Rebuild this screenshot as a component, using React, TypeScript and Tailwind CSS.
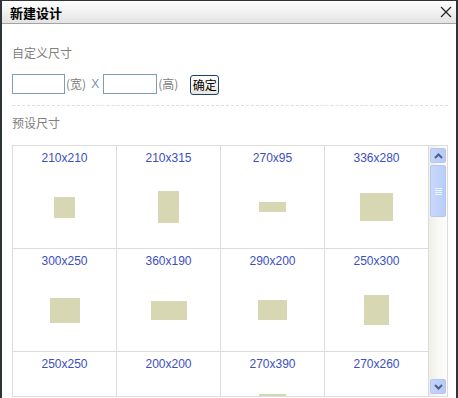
import React from "react";

// preset sizes shown in the grid
const presets = [
  { w: 210, h: 210 },
  { w: 210, h: 315 },
  { w: 270, h: 95 },
  { w: 336, h: 280 },
  { w: 300, h: 250 },
  { w: 360, h: 190 },
  { w: 290, h: 200 },
  { w: 250, h: 300 },
  { w: 250, h: 250 },
  { w: 200, h: 200 },
  { w: 270, h: 390 },
  { w: 270, h: 260 },
];

const cjk = "font-['SimSun','Noto_Sans_CJK_SC',sans-serif]";

function ScrollBar() {
  return (
    <div className="w-[18px] shrink-0 flex flex-col items-center py-[2px] bg-gradient-to-r from-[#efeee8] via-[#f8f8f4] to-[#fdfdfb]">
      {/* up arrow */}
      <div className="w-[16px] h-[15px] rounded-[2px] border border-[#b6c7ef] bg-gradient-to-r from-[#c4d4fb] to-[#b7cbf8] flex items-center justify-center">
        <svg width="9" height="6" viewBox="0 0 9 6">
          <path d="M1 5 L4.5 1.5 L8 5" fill="none" stroke="#4d6185" strokeWidth="2" />
        </svg>
      </div>
      {/* thumb */}
      <div className="mt-[2px] w-[16px] h-[52px] rounded-[2px] border border-[#b6c7ef] bg-gradient-to-r from-[#c9d8fc] to-[#b9cdf9] flex flex-col items-center justify-center gap-[1px]">
        <div className="w-[7px] h-px bg-[#eef3fe]" />
        <div className="w-[7px] h-px bg-[#eef3fe]" />
        <div className="w-[7px] h-px bg-[#eef3fe]" />
        <div className="w-[7px] h-px bg-[#eef3fe]" />
      </div>
      <div className="flex-1" />
      {/* down arrow */}
      <div className="w-[16px] h-[15px] rounded-[2px] border border-[#b6c7ef] bg-gradient-to-r from-[#c4d4fb] to-[#b7cbf8] flex items-center justify-center">
        <svg width="9" height="6" viewBox="0 0 9 6">
          <path d="M1 1 L4.5 4.5 L8 1" fill="none" stroke="#4d6185" strokeWidth="2" />
        </svg>
      </div>
    </div>
  );
}

export default function App() {
  return (
    <div className="w-[458px] h-[398px] overflow-hidden bg-white border-t border-x-2 border-[#2f3437] flex flex-col">
      {/* Title bar */}
      <div className="h-[23px] shrink-0 flex items-center justify-between pl-2 pr-[4px] bg-gradient-to-b from-white to-[#e3e3e3] border-b border-[#a4a4a4]">
        <span className={`${cjk} text-[13px] font-bold text-black leading-none`}>新建设计</span>
        <svg width="12" height="12" viewBox="0 0 12 12">
          <path d="M1 1 L11 11 M11 1 L1 11" stroke="#222" strokeWidth="1.2" />
        </svg>
      </div>

      <div className="pl-[10px] pr-[8px] flex flex-col">
        <div className={`${cjk} mt-[21px] text-[12px] leading-[16px] text-[#808080]`}>自定义尺寸</div>

        {/* custom size row */}
        <div className="mt-[13px] flex items-center h-[20px]">
          <input className="w-[53px] h-[20px] border border-[#7f9db9] outline-none" />
          <span className={`${cjk} ml-px text-[12px] text-[#808080]`}>(宽)</span>
          <span className="ml-[5px] font-['Liberation_Sans',sans-serif] text-[12px] text-[#8090b0]">X</span>
          <input className="ml-[4px] w-[54px] h-[20px] border border-[#7f9db9] outline-none" />
          <span className={`${cjk} ml-px text-[12px] text-[#808080]`}>(高)</span>
          <button className={`${cjk} ml-[12px] mt-[2px] w-[29px] h-[20px] p-0 rounded-[3px] border border-[#1c3f6e] bg-gradient-to-b from-white to-[#e8e6dc] text-[12px] leading-none text-black`}>
            确定
          </button>
        </div>

        <div className="mt-[11px] border-t border-dashed border-[#dedede]" />

        <div className={`${cjk} mt-[9px] text-[12px] leading-[16px] text-[#808080]`}>预设尺寸</div>

        {/* preset grid */}
        <div className="mt-[14px] w-[436px] h-[252px] border border-[#dcdcdc] flex overflow-hidden">
          <div className="w-[416px] h-[250px] overflow-hidden grid grid-cols-4 content-start">
            {presets.map((p) => (
              <div
                key={`${p.w}x${p.h}`}
                className="h-[103px] border-r border-b border-[#dcdcdc] flex flex-col items-center pt-[4px]"
              >
                <span className="font-['Liberation_Sans',sans-serif] text-[12px] leading-[16px] text-[#3a4fc2]">
                  {p.w}x{p.h}
                </span>
                <div className="flex-1 flex items-center justify-center">
                  <div className="bg-[#d7d7b3]" style={{ width: p.w / 10, height: p.h / 10 }} />
                </div>
              </div>
            ))}
          </div>
          <ScrollBar />
        </div>
      </div>
    </div>
  );
}
